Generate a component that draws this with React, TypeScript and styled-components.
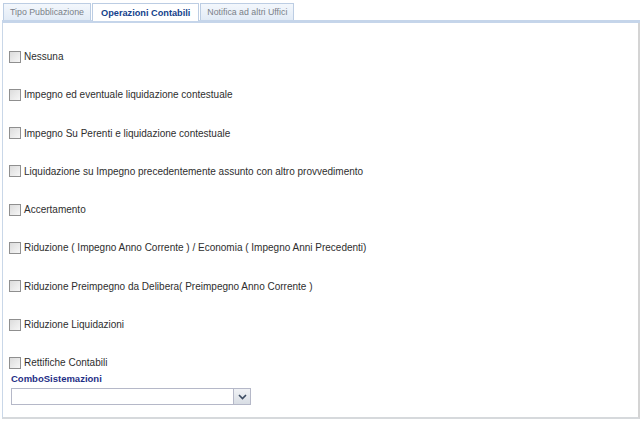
import React from 'react';
import styled, {createGlobalStyle} from "styled-components";

const GlobalStyle = createGlobalStyle`
  body {
    margin: 0;
    background: #fff;
    font-family: "Liberation Sans", Arial, sans-serif;
  }
`

const tabs = ['Tipo Pubblicazione', 'Operazioni Contabili', 'Notifica ad altri Uffici']

const options = [
    'Nessuna',
    'Impegno ed eventuale liquidazione contestuale',
    'Impegno Su Perenti e liquidazione contestuale',
    'Liquidazione su Impegno precedentemente assunto con altro provvedimento',
    'Accertamento',
    'Riduzione ( Impegno Anno Corrente ) / Economia ( Impegno Anni Precedenti)',
    'Riduzione Preimpegno da Delibera( Preimpegno Anno Corrente )',
    'Riduzione Liquidazioni',
    'Rettifiche Contabili',
]

export default function App() {
    return (
        <Wrapper>
            <GlobalStyle/>
            <TabStrip>
                {tabs.map((t, i) => <Tab key={t} active={i === 1}>{t}</Tab>)}
            </TabStrip>
            <Panel>
                <OptionList>
                    {options.map(o => <Option key={o}>
                        <Check type="checkbox"/>
                        <span>{o}</span>
                    </Option>)}
                </OptionList>
                <ComboLabel>ComboSistemazioni</ComboLabel>
                <Combo>
                    <ComboInput/>
                    <ComboButton>
                        <svg width="9" height="6" viewBox="0 0 9 6">
                            <path d="M1 1 L4.5 4.5 L8 1" fill="none" stroke="#3a4a60" strokeWidth="1.6"/>
                        </svg>
                    </ComboButton>
                </Combo>
            </Panel>
        </Wrapper>
    );
}

const Wrapper = styled.div`
  width: 638px;
  padding: 3px 0 0 2px;
`
const TabStrip = styled.div`
  display: flex;
  gap: 1px;
  padding-left: 1px;
  height: 17px;
  border-bottom: 3px solid #c5d5ea;
`
const Tab = styled.div<{active: boolean}>`
  display: flex;
  align-items: center;
  padding: 0 ${p => p.active ? '8px' : '6px'};
  height: ${p => p.active ? '18px' : '17px'};
  box-sizing: border-box;
  border: 1px solid #bccde3;
  border-bottom: none;
  background: ${p => p.active ? '#ffffff' : 'linear-gradient(#f3f7fc, #e2ebf6)'};
  color: ${p => p.active ? '#15428b' : '#7a7f88'};
  font-weight: ${p => p.active ? 'bold' : 'normal'};
  font-size: ${p => p.active ? '9.2px' : '8.8px'};
  white-space: nowrap;
`
const Panel = styled.div`
  height: 394px;
  border-left: 1px solid #c9d7e8;
  border-right: 2px solid #d4d4d4;
  border-bottom: 2px solid #d6d9dc;
  padding: 0 0 0 6px;
`
const OptionList = styled.div`
  display: flex;
  flex-direction: column;
  gap: 25.3px;
  padding-top: 27px;
`
const Option = styled.label`
  display: flex;
  align-items: center;
  gap: 3px;
  height: 13px;
  font-size: 10px;
  color: #2e2e2e;
  white-space: nowrap;
`
const Check = styled.input`
  appearance: none;
  margin: 0;
  width: 12px;
  height: 12px;
  border: 1px solid #8f8f8f;
  background: linear-gradient(135deg, #dcdcdc, #f6f6f6);
  box-sizing: border-box;
`
const ComboLabel = styled.div`
  margin-top: 4px;
  padding-left: 2px;
  font-size: 9.5px;
  font-weight: bold;
  color: #1f2f86;
`
const Combo = styled.div`
  display: flex;
  width: 240px;
  height: 17px;
  margin: 4px 0 0 2px;
`
const ComboInput = styled.div`
  flex: 1;
  border: 1px solid #b5b8c8;
  border-right: none;
  background: #fff;
`
const ComboButton = styled.div`
  width: 16px;
  display: flex;
  align-items: center;
  justify-content: center;
  border: 1px solid #b5b8c8;
  background: linear-gradient(#f0f2f5, #d8dde4);
`
